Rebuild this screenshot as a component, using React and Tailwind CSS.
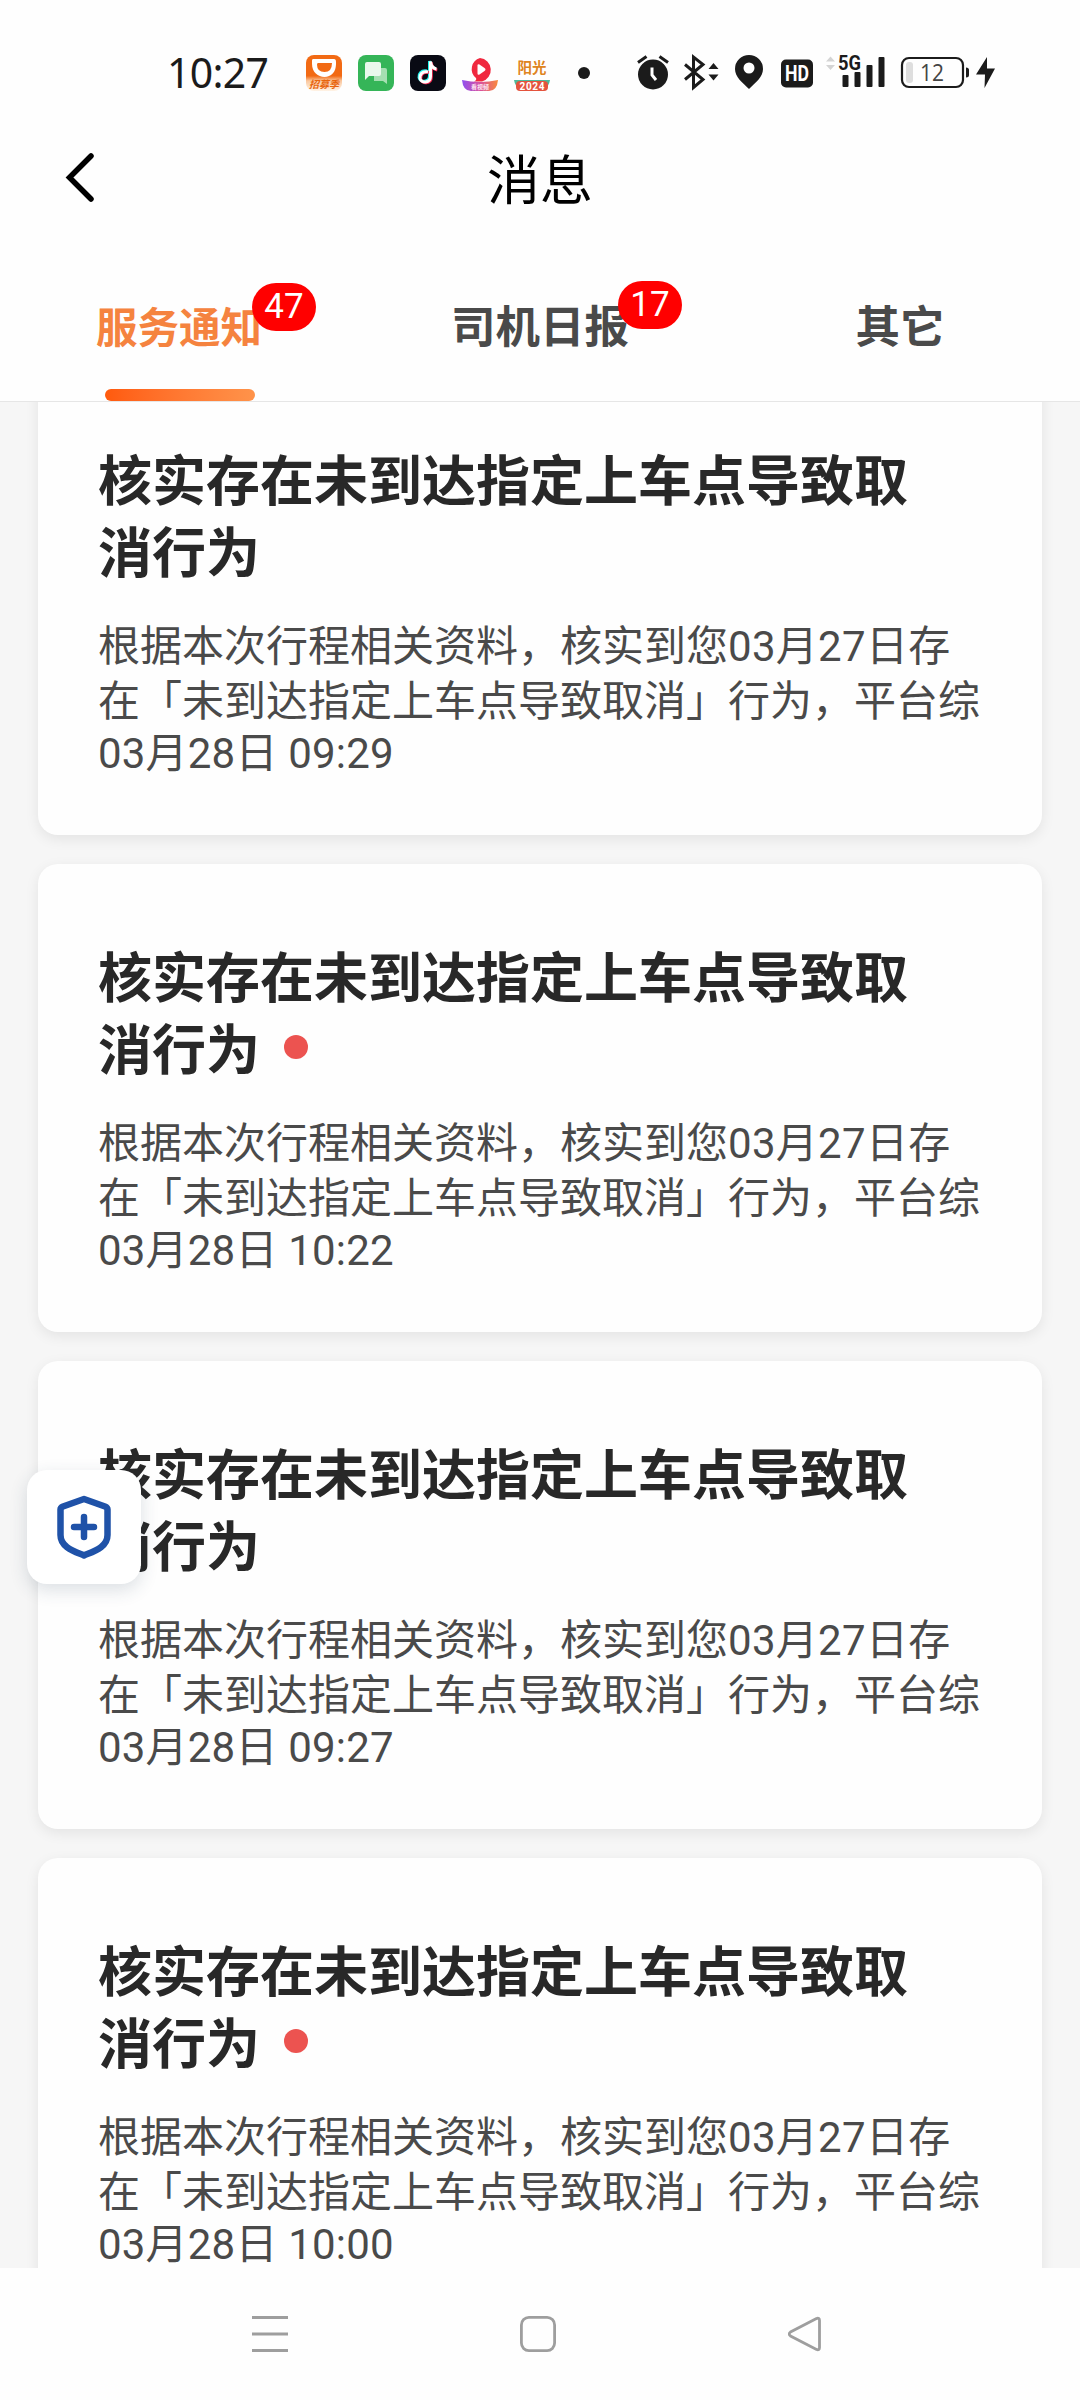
const MESSAGES = [
  { id: 1, time: "03月28日 09:29", unread: false },
  { id: 2, time: "03月28日 10:22", unread: true },
  { id: 3, time: "03月28日 09:27", unread: false },
  { id: 4, time: "03月28日 10:00", unread: true },
];

function AppIcons() {
  return (
    <div className="flex items-center gap-4">
      {/* Didi */}
      <svg className="w-9 h-9 overflow-visible" viewBox="0 0 36 36">
        <defs>
          <linearGradient id="didi" x1="0" y1="0" x2="0" y2="1">
            <stop offset="0.58" stopColor="#f26a14" />
            <stop offset="0.72" stopColor="#fbc9a0" />
            <stop offset="1" stopColor="#fff3e6" />
          </linearGradient>
        </defs>
        <rect width="36" height="36" rx="8" fill="url(#didi)" />
        <path d="M7 4h21q2 0 2 3v2c0 8-5 13-11.500 13S6 17 6 9V5.500Q6 4 7 4z" fill="#fff" />
        <path d="M12 8h14q0 9-7.500 9T11 9.500Q11 8 12 8z" fill="#f26a14" />
        <text
          x="18"
          y="33"
          textAnchor="middle"
          fontSize="10"
          fontWeight="700"
          fontStyle="italic"
          fontFamily="'Noto Sans CJK SC', sans-serif"
          fill="#e8640c"
        >
          招募季
        </text>
      </svg>

      {/* Messages */}
      <svg className="w-9 h-9" viewBox="0 0 36 36">
        <rect width="36" height="36" rx="8" fill="#35b558" />
        <path d="M16 13h11q2 0 2 2v14l-4-3h-9z" fill="#a5dfb2" />
        <path d="M9 7h12q2 0 2 2v10q0 2-2 2H11l-4 4V9q0-2 2-2z" fill="#e9f8ec" />
      </svg>

      {/* Douyin */}
      <svg className="w-9 h-9" viewBox="0 0 36 36" fill="none" strokeWidth="3">
        <rect width="36" height="36" rx="8" fill="#090a14" />
        <path d="M17 16c-6-1-8.500 3-8 6.500 1 5.500 10.500 5 10.500-2V6c.500 5 3 7 6 7.500" stroke="#25f4ee" />
        <path d="M18.800 17.500c-6-1-8.500 3-8 6.500 1 5.500 10.500 5 10.500-2V7.500c.500 5 3 7 6 7.500" stroke="#fe2c55" />
        <path d="M18 16.800c-6-1-8.500 3-8 6.500 1 5.500 10.500 5 10.500-2V6.500c.500 5 3 7 6 7.500" stroke="#fff" />
      </svg>

      {/* Video */}
      <svg className="w-9 h-9 overflow-visible" viewBox="0 0 36 36">
        <defs>
          <linearGradient id="ribbon">
            <stop offset="0" stopColor="#8f4ff0" />
            <stop offset="0.5" stopColor="#d8509f" />
            <stop offset="1" stopColor="#f98a3c" />
          </linearGradient>
        </defs>
        <path d="M18 3a12 12 0 0 1 2 23.500h-8q3-1.500 2-3.500A11.500 11.500 0 0 1 18 3z" fill="#f0283f" />
        <path d="M15.500 10.500q0-2 2-1l5 3.500q2 1.500 0 3l-5 3.500q-2 1-2-1z" fill="#fff" />
        <path d="M0 25q18 4 36 0-1 11-9 11H9q-8 0-9-11z" fill="url(#ribbon)" />
        <text
          x="18"
          y="34"
          textAnchor="middle"
          fontSize="6"
          fontWeight="700"
          fontFamily="'Noto Sans CJK SC', sans-serif"
          fill="#fbe3f0"
        >
          看视频
        </text>
      </svg>

      {/* Yangguang */}
      <svg className="w-9 h-9 overflow-visible" viewBox="0 0 36 36">
        <text
          x="18"
          y="18"
          textAnchor="middle"
          fontSize="14.500"
          fontWeight="700"
          fontFamily="'Noto Sans CJK SC', sans-serif"
          fill="#df8420"
        >
          阳光
        </text>
        <path d="M0 25h36q-1 7-6 8H6q-5-1-6-8z" fill="#4fb99a" />
        <rect x="2" y="26" width="32" height="10" rx="4" fill="#e4533d" />
        <text
          x="18"
          y="34.500"
          textAnchor="middle"
          fontSize="10"
          fontWeight="700"
          fontFamily="Roboto, sans-serif"
          textLength="25"
          fill="#fff"
        >
          2024
        </text>
      </svg>
    </div>
  );
}

function StatusIcons() {
  return (
    <svg
      className="w-[362px] h-9 overflow-visible"
      viewBox="0 0 362 36"
      fill="#1b1b1b"
      fontFamily="Roboto, sans-serif"
    >
      {/* alarm */}
      <circle cx="16" cy="19.500" r="15" />
      <path d="M1 7.500l8.500-6M31 7.500l-8.500-6" stroke="#1b1b1b" strokeWidth="3" />
      <path d="M15 12.500v7.500l4 5" stroke="#fff" strokeWidth="3" fill="none" />

      {/* bluetooth */}
      <path
        d="M48 9.500l18 15-9.500 8V2l9.500 7.500-18 15"
        fill="none"
        stroke="#1b1b1b"
        strokeWidth="3"
      />
      <path d="M71.500 14l5-6 5 6zM71.500 19.500l5 6 5-6z" />

      {/* location */}
      <path d="M112 0a14 14 0 0 1 14 14c0 8-7 13-14 20-7-7-14-12-14-20a14 14 0 0 1 14-14z" />
      <circle cx="112" cy="13" r="5.500" fill="#fff" />

      {/* HD */}
      <rect x="144" y="4.500" width="32" height="28" rx="5" />
      <text
        x="160"
        y="26"
        textAnchor="middle"
        fontSize="22"
        fontWeight="700"
        fill="#fff"
        textLength="24"
        lengthAdjust="spacingAndGlyphs"
      >
        HD
      </text>

      {/* signal */}
      <path d="M189 6.500l4.500-5 4.500 5zM189 10l4.500 5 4.500-5z" fill="#d4d4d4" />
      <text x="201" y="15" fontSize="20" fontWeight="700" textLength="23" lengthAdjust="spacingAndGlyphs">
        5G
      </text>
      <rect x="205.500" y="20" width="6" height="12" rx="1" />
      <rect x="217.500" y="17" width="6" height="15" rx="1" />
      <rect x="229.500" y="10" width="6" height="22" rx="1" />
      <rect x="241.500" y="2" width="6" height="30" rx="1" />

      {/* battery */}
      <rect x="265" y="3" width="61" height="29" rx="7" fill="none" stroke="#1b1b1b" strokeWidth="2.200" />
      <rect x="269" y="7" width="7" height="21" rx="3" fill="#dedede" />
      <path d="M329 12.500q3 0 3 2.500v5q0 2.500-3 2.500z" />
      <text x="295" y="26" textAnchor="middle" fontSize="23" fontFamily="'Open Sans', sans-serif" textLength="24" lengthAdjust="spacingAndGlyphs" fill="#444">
        12
      </text>

      {/* charging */}
      <path d="M350 2l-11 17.500h9L347.500 33 358 13.500h-8z" />
    </svg>
  );
}

function StatusBar() {
  return (
    <div className="flex items-center h-[146px] pl-[167px]">
      <div className="w-[139px] text-[41px] leading-[60px] tracking-[-0.7px] text-[#1b1b1b] font-['Noto_Sans'] pb-0.5">
        10:27
      </div>
      <AppIcons />
      <div className="w-3 h-3 rounded-full bg-[#1b1b1b] ml-[28px] mr-[47px]" />
      <StatusIcons />
    </div>
  );
}

function Badge({ children, className }) {
  return (
    <span
      className={`absolute w-16 h-12 rounded-3xl bg-[#ff0000] text-white text-[35px] leading-[47px] font-normal text-center ${className}`}
    >
      {children}
    </span>
  );
}

function MessageCard({ time, unread }) {
  return (
    <div className="h-[468px] shrink-0 rounded-[20px] bg-[#fefefe] px-[60px] pt-[75px] shadow-[0_4px_14px_rgba(0,0,0,0.08)]">
      <h2 className="text-[54px] leading-[72px] font-bold text-[#282828] font-['Noto_Sans_CJK_SC',sans-serif] whitespace-nowrap">
        核实存在未到达指定上车点导致取
        <span className="flex items-center">
          消行为
          {unread && <i className="w-6 h-6 rounded-full bg-[#ec5350] ml-6" />}
        </span>
      </h2>
      <p className="mt-[33px] text-[42px] leading-[55px] text-[#4a4a4a] whitespace-nowrap">
        根据本次行程相关资料，核实到您<span className="tracking-[0.3px]">03月27日</span>存
        <br />
        在「未到达指定上车点导致取消」行为，平台综
      </p>
      <p className="text-[42px] leading-[50px] tracking-[0.2px] text-[#4a4a4a]">{time}</p>
    </div>
  );
}

export default function App() {
  return (
    <div className="relative flex flex-col w-[1080px] h-[2400px] overflow-hidden bg-[#fefefe] font-[Roboto,'Noto_Sans_CJK_SC',sans-serif]">
      <StatusBar />

      <header className="grid grid-cols-3 items-center h-[68px] px-[60px]">
        <svg className="w-10 h-[52px] mb-1.5" viewBox="0 0 40 52" fill="none">
          <path d="M31 4L9.500 25.500 31 47" stroke="#000" strokeWidth="5.500" strokeLinecap="round" />
        </svg>
        <h1 className="pt-0.5 text-[53px] leading-[68px] text-black text-center">消息</h1>
      </header>

      <nav className="flex h-[188px] pt-[79px] border-b border-[#e6e6e6] text-[44.5px] leading-[70px] font-bold text-[#4a4a4a]">
        <div className="relative w-[360px] pl-[96px]">
          <span className="text-[41.5px] text-[#f5833f]">服务通知</span>
          <Badge className="left-[252px] -top-[10px]">47</Badge>
          <div className="w-[150px] h-3 mt-[25px] ml-[9px] rounded-full bg-linear-to-r from-[#ff5a0c] to-[#ff934a]" />
        </div>
        <div className="relative w-[360px] text-center">
          司机日报
          <Badge className="left-[258px] -top-[12px]">17</Badge>
        </div>
        <div className="w-[360px] text-center">其它</div>
      </nav>

      <main className="flex-1 min-h-0 overflow-hidden bg-[#f6f6f6]">
        <div className="flex flex-col gap-[29px] -mt-[35px] px-[38px]">
          {MESSAGES.map((m) => (
            <MessageCard key={m.id} time={m.time} unread={m.unread} />
          ))}
        </div>
      </main>

      {/* floating safety button */}
      <button className="absolute left-[27px] top-[1470px] w-[114px] h-[114px] rounded-[20px] bg-white flex items-center justify-center shadow-[0_6px_18px_rgba(40,60,90,0.16)]">
        <svg className="w-[54px] h-16" viewBox="0 0 54 64" fill="none" stroke="#1f52a8">
          <path
            d="M27 4L48 11.500q2.500 1 2.500 3V40c0 12-13 16-23.500 20.500C16.500 56 3.500 52 3.500 40V14.500q0-2 2.500-3z"
            strokeWidth="6.500"
            strokeLinejoin="round"
          />
          <path d="M27 22v20M17 32h20" strokeWidth="6.500" strokeLinecap="round" />
        </svg>
      </button>

      {/* system navigation */}
      <footer className="flex items-center h-[132px] pl-[252px] gap-[232px] bg-[#fefefe]">
        <svg className="w-9 h-9" viewBox="0 0 36 36">
          <path d="M0 1.500h36M0 18h36M0 34.500h36" stroke="#9e9e9e" strokeWidth="3" />
        </svg>
        <svg className="w-9 h-9" viewBox="0 0 36 36">
          <rect x="1.400" y="1.400" width="33.200" height="33.200" rx="7.500" fill="none" stroke="#9e9e9e" strokeWidth="2.800" />
        </svg>
        <svg className="w-9 h-9" viewBox="0 0 36 36">
          <path
            d="M28.500 2.500L2.500 16q-2.500 2 0 4l26 13.500q3 1 3-2v-27q0-3-3-2z"
            fill="none"
            stroke="#9e9e9e"
            strokeWidth="2.800"
          />
        </svg>
      </footer>
    </div>
  );
}
